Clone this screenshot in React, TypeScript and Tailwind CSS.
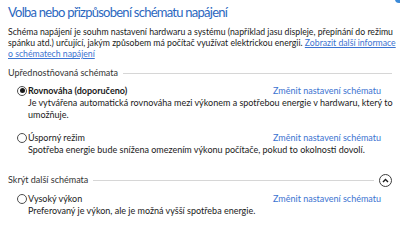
import React from 'react';

const font = { fontFamily: 'Lato, "Open Sans", sans-serif' };

function Radio({ checked }: { checked?: boolean }) {
  return (
    <span className="inline-flex h-[10px] w-[10px] shrink-0 items-center justify-center rounded-full border border-[#4d4d4d] bg-white">
      {checked && <span className="h-[5px] w-[5px] rounded-full bg-[#1a1a1a]" />}
    </span>
  );
}

interface Plan {
  name: string;
  desc: string[];
  checked?: boolean;
  bold?: boolean;
}

function PlanRow({ plan }: { plan: Plan }) {
  return (
    <div className="pl-[17px] pr-[19px]">
      <div className="flex h-[13px] items-center justify-between">
        <div className="flex items-center gap-[1px]">
          <Radio checked={plan.checked} />
          <span className={`text-[9px] text-[#1a1a1a] ${plan.bold ? 'font-bold' : ''}`}>{plan.name}</span>
        </div>
        <span className="text-[9px] text-[#3b73d1]">Změnit nastavení schématu</span>
      </div>
      <div className="pl-[11px] text-[9px] leading-[12px] text-[#1a1a1a] whitespace-nowrap">
        {plan.desc.map((d) => (
          <div key={d}>{d}</div>
        ))}
      </div>
    </div>
  );
}

function GroupHeader({ label, button }: { label: string; button?: boolean }) {
  return (
    <div className="flex h-[14px] items-center gap-[5px] pl-[8px] pr-[8px]">
      <span className="text-[9px] text-[#333333]">{label}</span>
      <div className="h-px flex-1 bg-[#d6d6d6]" />
      {button && (
        <span className="flex h-[13px] w-[13px] items-center justify-center rounded-full border border-[#3c3c3c]">
          <svg width="7" height="5" viewBox="0 0 7 5">
            <path d="M1 4 L3.5 1.5 L6 4" fill="none" stroke="#1a1a1a" strokeWidth="1.4" />
          </svg>
        </span>
      )}
    </div>
  );
}

export default function App() {
  return (
    <div className="relative h-[241px] w-[400px] overflow-hidden bg-white" style={font}>
      <span className="absolute right-[-4px] top-[-5px] h-[8px] w-[9px] rounded-full bg-[#3c8ad8]" />
      <div className="pl-[8px] pt-[3px] text-[13px] leading-[18px] tracking-[-0.75px] text-[#2b67c0] whitespace-nowrap">
        Volba nebo přizpůsobení schématu napájení
      </div>
      <div className="mt-[5px] pl-[8px] text-[8.7px] leading-[11px] text-[#1a1a1a] whitespace-nowrap">
        <div>Schéma napájení je souhm nastavení hardwaru a systému (například jasu displeje, přepínání do režimu</div>
        <div>
          spánku atd.) určující, jakým způsobem má počítač využívat elektrickou energii.{' '}
          <span className="text-[#3b73d1] underline">Zobrazit další informace</span>
        </div>
        <div>
          <span className="text-[#3b73d1] underline">o schématech napájení</span>
        </div>
      </div>
      <div className="mt-[7px]">
        <GroupHeader label="Upřednostňovaná schémata" />
      </div>
      <div className="mt-[4px]">
        <PlanRow
          plan={{
            name: 'Rovnováha (doporučeno)',
            bold: true,
            checked: true,
            desc: [
              'Je vytvářena automatická rovnováha mezi výkonem a spotřebou energie v hardwaru, který to',
              'umožňuje.',
            ],
          }}
        />
      </div>
      <div className="mt-[10px]">
        <PlanRow
          plan={{
            name: 'Úsporný režim',
            desc: ['Spotřeba energie bude snížena omezením výkonu počítače, pokud to okolnosti dovolí.'],
          }}
        />
      </div>
      <div className="mt-[17px]">
        <GroupHeader label="Skrýt další schémata" button />
      </div>
      <div className="mt-[5px]">
        <PlanRow
          plan={{
            name: 'Vysoký výkon',
            desc: ['Preferovaný je výkon, ale je možná vyšší spotřeba energie.'],
          }}
        />
      </div>
    </div>
  );
}
